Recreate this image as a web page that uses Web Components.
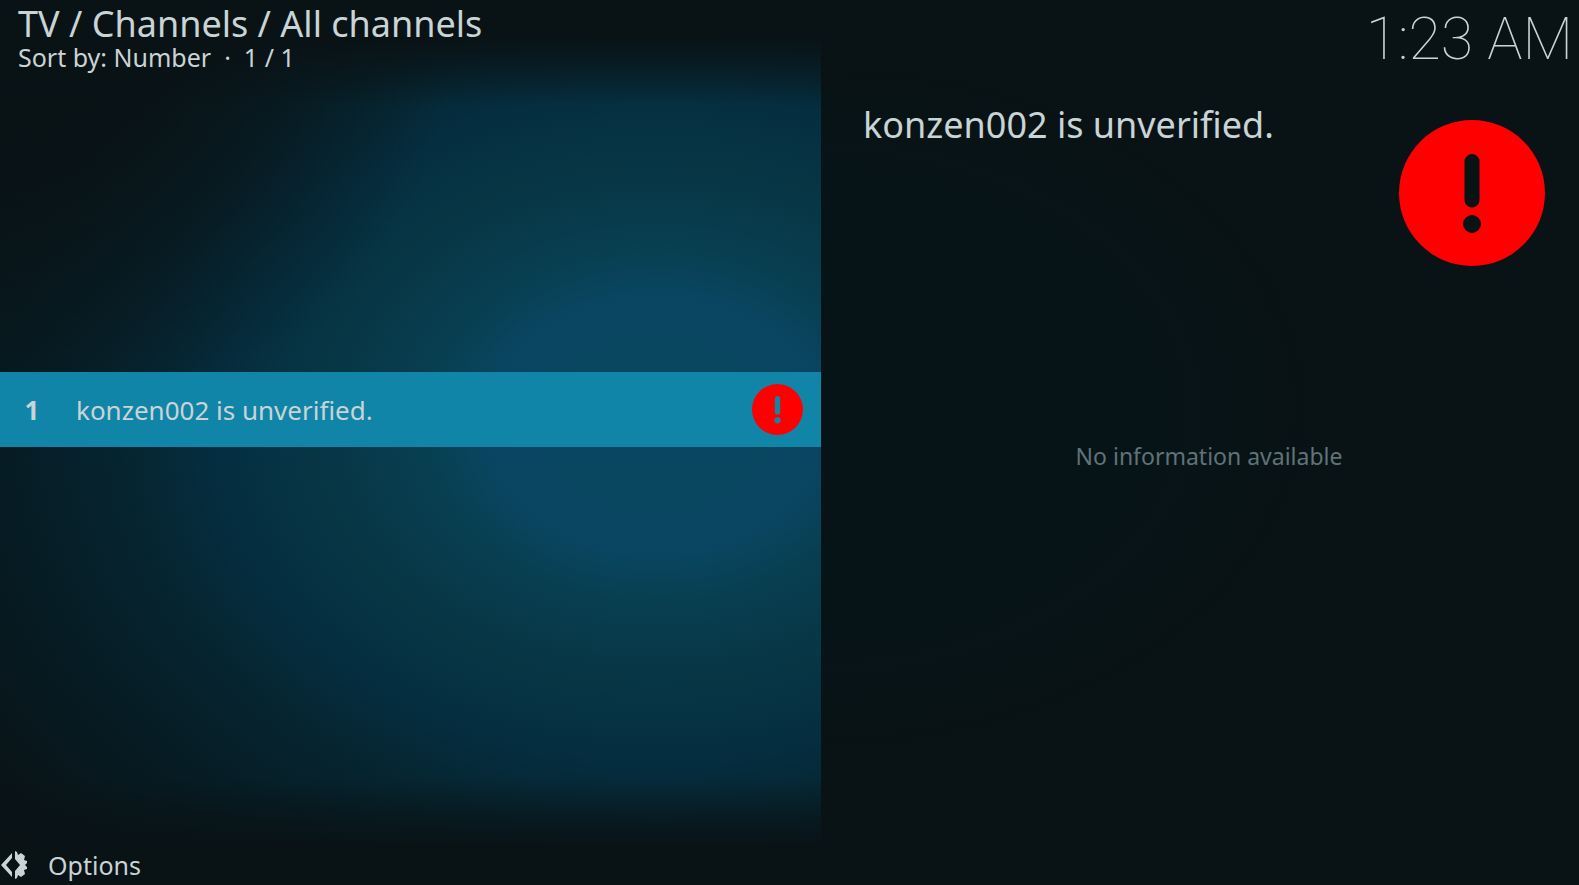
<!DOCTYPE html>
<html lang="en">
<head>
<meta charset="utf-8">
<title>All channels</title>
<style>
  html, body {
    margin: 0;
    background: #091215;
  }
</style>
</head>
<body>
<channel-window>
  <window-heading slot="heading" heading="TV / Channels / All channels">Sort by: Number &nbsp;·&nbsp; 1 / 1</window-heading>
  <wall-clock slot="clock">1:23 AM</wall-clock>
  <channel-row slot="list" number="1">konzen002 is unverified.</channel-row>
  <channel-details slot="details" name="konzen002 is unverified.">No information available</channel-details>
  <options-button slot="footer">Options</options-button>
</channel-window>

<script>
class ChannelWindow extends HTMLElement {
    constructor() {
        super();
        this.root = this.attachShadow({ mode: "open" });
    }

    connectedCallback() {
        this.root.innerHTML = `
          <style>
            :host {
              display: grid;
              grid-template-columns: 52% 1fr;
              min-height: 100vh;
              font-family: "Noto Sans", "Open Sans", sans-serif;
              color: #c8d4d6;
            }
            .side {
              display: grid;
              grid-template-rows: 80px 1fr 46px;
            }
            .left {
              background:
                linear-gradient(#091215 4%, #09121500 12%, #09121500 88%, #091215 96%),
                radial-gradient(56% 52% at 0 0, #091215 30%, #09121500),
                radial-gradient(88% 62% at 80% 48%, #0a4861 0, #094560 24%, #083e50 33%, #073645 47%, #052e40 61%, #06242f 75%, #061c24 90%, #091215 115%);
            }
            .right {
              background: radial-gradient(70% 42% at 0 46%, #071417 60%, #091215);
            }
            .list {
              display: flex;
              flex-direction: column;
              justify-content: center;
              padding-bottom: 100px;
            }
          </style>
          <section class="side left">
            <slot name="heading"></slot>
            <div class="list"><slot name="list"></slot></div>
            <slot name="footer"></slot>
          </section>
          <section class="side right">
            <slot name="clock"></slot>
            <slot name="details"></slot>
          </section>
        `;
    }
}

class WindowHeading extends HTMLElement {
    constructor() {
        super();
        this.root = this.attachShadow({ mode: "open" });
    }

    connectedCallback() {
        this.root.innerHTML = `
          <style>
            :host {
              display: block;
              padding: 4px 18px 0;
              white-space: nowrap;
            }
            h1 {
              margin: 0;
              font-size: 36px;
              font-weight: 400;
              line-height: 40px;
            }
            p {
              margin: 0;
              font-size: 25px;
              line-height: 26px;
            }
          </style>
          <h1>${this.getAttribute("heading")}</h1>
          <p><slot></slot></p>
        `;
    }
}

class WallClock extends HTMLElement {
    constructor() {
        super();
        this.root = this.attachShadow({ mode: "open" });
        this.root.innerHTML = `
          <style>
            :host {
              display: block;
              padding: 4px 6px 0;
              font-family: Roboto, sans-serif;
              font-size: 59px;
              font-weight: 100;
              line-height: 70px;
              text-align: right;
            }
          </style>
          <slot></slot>
        `;
    }
}

// Red disc with the mark cut out, so the surface below shows through.
class AlertIcon extends HTMLElement {
    constructor() {
        super();
        this.root = this.attachShadow({ mode: "open" });
        this.root.innerHTML = `
          <style>
            :host {
              display: block;
              flex: none;
              width: var(--icon-size, 51px);
              height: var(--icon-size, 51px);
            }
            svg {
              display: block;
              width: 100%;
              height: 100%;
            }
          </style>
          <svg viewBox="0 0 146 146" aria-hidden="true">
            <path fill="#f00" fill-rule="evenodd" d="M73 0a73 73 0 1 1 0 146a73 73 0 1 1 0-146z
              M65.5 41.500v38.500a7.500 7.500 0 0 0 15 0v-38.500a7.500 7.500 0 0 0-15 0z
              M73 95a9 9 0 1 0 0 18a9 9 0 1 0 0-18z"/>
          </svg>
        `;
    }
}

class ChannelRow extends HTMLElement {
    constructor() {
        super();
        this.root = this.attachShadow({ mode: "open" });
    }

    connectedCallback() {
        this.root.innerHTML = `
          <style>
            :host {
              display: block;
            }
            button {
              display: grid;
              grid-template-columns: 28px 1fr auto;
              align-items: center;
              gap: 30px;
              width: 100%;
              height: 75px;
              padding: 0 18px;
              border: 0;
              background: #1085a8;
              color: inherit;
              font: inherit;
              font-size: 26px;
              line-height: 36px;
              text-align: left;
            }
            b {
              text-align: center;
            }
          </style>
          <button type="button">
            <b>${this.getAttribute("number")}</b>
            <span><slot></slot></span>
            <alert-icon></alert-icon>
          </button>
        `;
    }
}

class ChannelDetails extends HTMLElement {
    constructor() {
        super();
        this.root = this.attachShadow({ mode: "open" });
    }

    connectedCallback() {
        this.root.innerHTML = `
          <style>
            :host {
              display: grid;
              grid-template-rows: 1fr auto 1fr;
              padding-bottom: 8px;
            }
            header {
              display: flex;
              justify-content: space-between;
              align-items: flex-start;
              padding: 0 34px 0 42px;
            }
            h2 {
              margin: 20px 0 0;
              font-size: 36px;
              font-weight: 400;
              line-height: 50px;
            }
            alert-icon {
              --icon-size: 146px;
              margin-top: 40px;
            }
            p {
              margin: 0;
              padding-left: 18px;
              font-size: 23px;
              line-height: 30px;
              text-align: center;
              color: #5f7378;
            }
          </style>
          <header>
            <h2>${this.getAttribute("name")}</h2>
            <alert-icon></alert-icon>
          </header>
          <p><slot></slot></p>
        `;
    }
}

class OptionsButton extends HTMLElement {
    constructor() {
        super();
        this.root = this.attachShadow({ mode: "open" });
        this.root.innerHTML = `
          <style>
            :host {
              display: block;
            }
            button {
              display: flex;
              align-items: center;
              gap: 20px;
              padding: 8px 0 0;
              border: 0;
              background: none;
              color: inherit;
              font: inherit;
              font-size: 25px;
              line-height: 36px;
            }
            svg {
              width: 28px;
              height: 28px;
            }
          </style>
          <button type="button">
            <svg viewBox="0 0 28 28" fill="currentColor" aria-hidden="true">
              <path d="M12 2v5l-6 7 6 7v5L1 14z"/>
              <path d="M15 0l2 1 1 3 3-2 4 3-1 4 3 1v2l-2 2 2 2v2l-3 1 1 4-4 3-3-2-1 3-2 1v-8l5-6-5-6z"/>
            </svg>
            <slot></slot>
          </button>
        `;
    }
}

customElements.define("alert-icon", AlertIcon);
customElements.define("window-heading", WindowHeading);
customElements.define("wall-clock", WallClock);
customElements.define("channel-row", ChannelRow);
customElements.define("channel-details", ChannelDetails);
customElements.define("options-button", OptionsButton);
customElements.define("channel-window", ChannelWindow);
</script>
</body>
</html>
